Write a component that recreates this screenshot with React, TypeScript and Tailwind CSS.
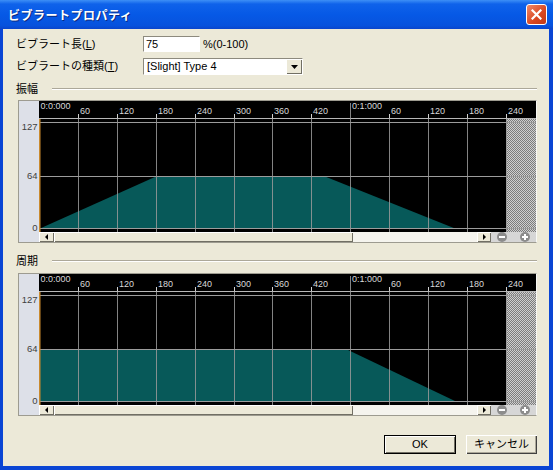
import React from "react";

const STEP = 38.9;
const LABELS = ["0:0:000", "60", "120", "180", "240", "300", "360", "420", "0:1:000", "60", "120", "180", "240"];

const raised =
  "bg-[#ece9d8] shadow-[inset_1px_1px_0_#ffffff,inset_-1px_-1px_0_#716f64]";

function Plot({ id, points }: { id: string; points: string }) {
  const xs = Array.from({ length: 13 }, (_, k) => Math.round(STEP * k) + 0.5);
  return (
    <svg width={497} height={131} viewBox="0 0 497 131" className="block bg-black">
      <defs>
        <pattern id={id} width="2" height="2" patternUnits="userSpaceOnUse">
          <rect width="2" height="2" fill="#cfcfcf" />
          <rect width="1" height="1" fill="#7c7c7c" />
          <rect x="1" y="1" width="1" height="1" fill="#7c7c7c" />
        </pattern>
      </defs>
      <rect x="467" y="18" width="30" height="113" fill={`url(#${id})`} />
      <polygon points={points} fill="#075959" />
      <line x1="0" x2="497" y1="17.5" y2="17.5" stroke="#b8b8b8" />
      <line x1="0" x2="497" y1="21.5" y2="21.5" stroke="#9c9c9c" />
      <line x1="0" x2="497" y1="75.5" y2="75.5" stroke="#9c9c9c" />
      <line x1="0" x2="497" y1="127.5" y2="127.5" stroke="#9c9c9c" />
      {xs.slice(1).map((x, i) => (
        <line key={i} x1={x} x2={x} y1={i + 1 === 8 ? 2 : 18} y2={131} stroke="#9a9a9a" strokeOpacity={0.85} />
      ))}
      {xs.map((x, k) =>
        k === 0 || k === 8 ? null : (
          <line key={"t" + k} x1={x} x2={x} y1={13} y2={17} stroke="#d0d0d0" />
        )
      )}
      {LABELS.map((t, k) => (
        <text
          key={"l" + k}
          x={xs[k] + (k === 0 ? 1 : 1.5)}
          y={k === 0 || k === 8 ? 8 : 13}
          fill="#d8d8d8"
          fontSize="9"
          fontFamily="'Liberation Sans', sans-serif"
        >
          {t}
        </text>
      ))}
      <rect x="0" y="18" width="1.5" height="113" fill="#c98a2e" />
    </svg>
  );
}

function LeftRuler() {
  return (
    <svg width={20} height={141} viewBox="0 0 20 141" className="block">
      <rect width="20" height="141" fill="#dde0e8" />
      {[
        ["127", 29],
        ["64", 78],
        ["0", 130],
      ].map(([t, y]) => (
        <text
          key={t}
          x="18.5"
          y={y}
          textAnchor="end"
          fontSize="9.5"
          fill="#404040"
          fontFamily="'Liberation Sans', sans-serif"
        >
          {t}
        </text>
      ))}
    </svg>
  );
}

function Scrollbar() {
  return (
    <div className="flex h-[10px]">
      <div className={`${raised} w-[15px] flex items-center justify-center`}>
        <svg width="4" height="6" viewBox="0 0 4 6">
          <path d="M3 0 L0 3 L3 6 Z" fill="#000" />
        </svg>
      </div>
      <div className={`${raised} w-[299px]`} />
      <div className="flex-1 bg-[#f5f4ee]" />
      <div className={`${raised} w-[14px] flex items-center justify-center`}>
        <svg width="4" height="6" viewBox="0 0 4 6">
          <path d="M1 0 L4 3 L1 6 Z" fill="#000" />
        </svg>
      </div>
      <div className="w-[45px] flex bg-[#d6d6d6]">
        <div className="w-[22px] flex items-center justify-center">
          <svg width="10" height="10" viewBox="0 0 10 10">
            <circle cx="5" cy="5" r="5" fill="#8c8c8c" />
            <rect x="2" y="4" width="6" height="2" fill="#fff" />
          </svg>
        </div>
        <div className="w-[23px] flex items-center justify-center">
          <svg width="10" height="10" viewBox="0 0 10 10">
            <circle cx="5" cy="5" r="5" fill="#8c8c8c" />
            <rect x="2" y="4" width="6" height="2" fill="#fff" />
            <rect x="4" y="2" width="2" height="6" fill="#fff" />
          </svg>
        </div>
      </div>
    </div>
  );
}

function Graph({ id, points }: { id: string; points: string }) {
  return (
    <div className="ml-[2px] w-[519px] h-[143px] flex border border-t-[#9d9b90] border-l-[#9d9b90] border-b-[#9d9b90] border-r-[#f8f8f4]">
      <LeftRuler />
      <div className="flex flex-col">
        <Plot id={id} points={points} />
        <Scrollbar />
      </div>
    </div>
  );
}

function GroupLabel({ text }: { text: string }) {
  return (
    <div className="flex items-center h-[12px]">
      <span className="text-[11px] leading-none">{text}</span>
      <div className="flex-1 ml-[14px] border-t border-t-[#aca899] border-b border-b-white" />
    </div>
  );
}

export default function App() {
  return (
    <div className="w-[553px] h-[470px] flex flex-col bg-[#0a45d4] font-['Liberation_Sans','Noto_Sans_CJK_JP',sans-serif] text-black">
      {/* title bar */}
      <div className="h-[29px] flex items-center justify-between pl-[8px] pr-[6px] bg-[linear-gradient(to_bottom,#3d8ff6_0%,#0f62ea_14%,#0659e6_50%,#0752dd_88%,#0a45cc_100%)]">
        <span className="text-white text-[12px] font-bold tracking-[0.5px] [text-shadow:1px_1px_0_#0a2a80] font-['Noto_Sans_CJK_JP',sans-serif]">
          ビブラートプロパティ
        </span>
        <div className="w-[21px] h-[21px] rounded-[3px] border border-white bg-[linear-gradient(135deg,#f08a6a,#d9461f_60%,#c23a16)] flex items-center justify-center">
          <svg width="11" height="11" viewBox="0 0 11 11">
            <path d="M1.5 1.5 L9.5 9.5 M9.5 1.5 L1.5 9.5" stroke="#fff" strokeWidth="2.2" strokeLinecap="square" />
          </svg>
        </div>
      </div>

      {/* body */}
      <div className="flex-1 ml-[3px] mr-[4px] mb-[4px] bg-[#ece9d8] flex flex-col pt-[7px] pl-[13px] pr-[12px] text-[11px]">
        <div className="flex items-center h-[16px]">
          <div className="w-[127px]">
            ビブラート長(<span className="underline">L</span>)
          </div>
          <div className="w-[57px] h-[16px] bg-white border border-t-[#8d8a7e] border-l-[#8d8a7e] border-b-white border-r-white pl-[2px] flex items-center">
            75
          </div>
          <span className="ml-[3px]">%(0-100)</span>
        </div>

        <div className="flex items-center h-[17px] mt-[6px]">
          <div className="w-[127px]">
            ビブラートの種類(<span className="underline">T</span>)
          </div>
          <div className="w-[160px] h-[17px] bg-white border border-t-[#8d8a7e] border-l-[#8d8a7e] border-b-white border-r-white flex items-center">
            <span className="flex-1 pl-[3px]">[Slight] Type 4</span>
            <div className={`${raised} w-[16px] h-[15px] flex items-center justify-center`}>
              <svg width="7" height="4" viewBox="0 0 7 4">
                <path d="M0 0 L7 0 L3.5 4 Z" fill="#000" />
              </svg>
            </div>
          </div>
        </div>

        <div className="mt-[8px]">
          <GroupLabel text="振幅" />
        </div>
        <div className="mt-[5px]">
          <Graph id="hatchA" points="1,127.5 117,75.5 286,75.5 416,127.5" />
        </div>

        <div className="mt-[12px]">
          <GroupLabel text="周期" />
        </div>
        <div className="mt-[6px]">
          <Graph id="hatchB" points="1,127.5 1,75.5 308,75.5 417,127.5" />
        </div>

        <div className="mt-[19px] flex justify-end gap-[10px]">
          <div className="w-[72px] h-[19px] border border-black">
            <div className={`${raised} h-full flex items-center justify-center`}>OK</div>
          </div>
          <div className="w-[71px] h-[19px] bg-[#ece9d8] shadow-[inset_1px_1px_0_#ffffff,inset_-1px_-1px_0_#404040,inset_-2px_-2px_0_#aca899] flex items-center justify-center">
            キャンセル
          </div>
        </div>
      </div>
    </div>
  );
}
